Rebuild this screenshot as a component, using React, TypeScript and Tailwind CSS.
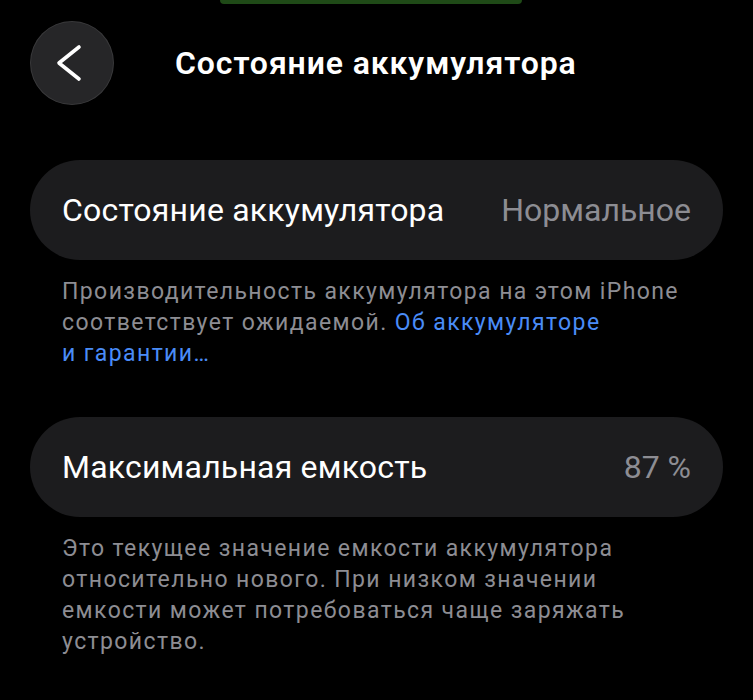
function Row({ label, value }: { label: string; value: string }) {
  return (
    <div className="mx-[30px] flex h-[100px] items-center justify-between rounded-full bg-[#1c1c1e] px-[32px]">
      <span className="text-[32px] tracking-[0.2px] text-white">{label}</span>
      <span className="text-[32px] text-[#8d8d93]">{value}</span>
    </div>
  );
}

function BackButton() {
  return (
    <button className="ml-[30px] flex h-[84px] w-[84px] items-center justify-center rounded-full bg-[#262628] shadow-[inset_0_0_0_1px_rgba(255,255,255,0.09)]">
      <svg width="84" height="84" viewBox="0 0 84 84" fill="none">
        <polyline
          points="49,26 29,42 49,58"
          stroke="#ffffff"
          strokeWidth="3.6"
          strokeLinecap="round"
          strokeLinejoin="round"
        />
      </svg>
    </button>
  );
}

export default function App() {
  return (
    <div
      className="relative h-[700px] w-[753px] overflow-hidden bg-black"
      style={{ fontFamily: 'Roboto, "Noto Sans", sans-serif' }}
    >
      {/* status bar pill peeking at the top */}
      <div className="absolute left-[220px] top-0 h-[4px] w-[302px] rounded-b-full bg-[#1f4a17]" />

      <div className="flex items-center pt-[21px]">
        <BackButton />
        <h1 className="ml-[61px] text-[32px] font-semibold tracking-[0.9px] text-white">
          Состояние аккумулятора
        </h1>
      </div>

      <div className="mt-[55px]">
        <Row label="Состояние аккумулятора" value="Нормальное" />
        <p className="ml-[62px] mr-[60px] mt-[16px] text-[23px] leading-[31px] tracking-[1.4px] text-[#8d8d93]">
          Производительность аккумулятора на этом iPhone соответствует ожидаемой.{' '}
          <span className="text-[#4a8cf7]">Об аккумуляторе и&nbsp;гарантии…</span>
        </p>
      </div>

      <div className="mt-[48px]">
        <Row label="Максимальная емкость" value="87 %" />
        <p className="ml-[62px] mr-[60px] mt-[16px] text-[23px] leading-[31px] tracking-[1.4px] text-[#8d8d93]">
          Это текущее значение емкости аккумулятора относительно нового. При низком значении емкости может
          потребоваться чаще заряжать устройство.
        </p>
      </div>
    </div>
  );
}
